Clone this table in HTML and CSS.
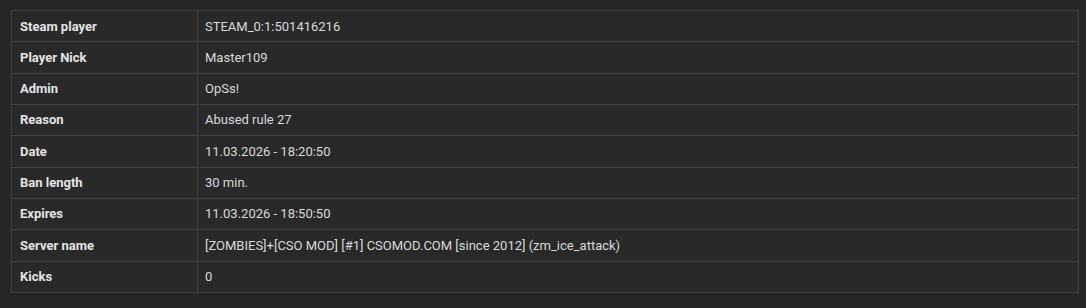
FILE: index.html
```html
<!DOCTYPE html>
<html>
<head>
<meta charset="utf-8">
<link rel="stylesheet" href="styles.css">
</head>
<body>
<table class="info">
  <tbody>
    <tr><th>Steam player</th><td>STEAM_0:1:501416216</td></tr>
    <tr><th>Player Nick</th><td>Master109</td></tr>
    <tr><th>Admin</th><td>OpSs!</td></tr>
    <tr><th>Reason</th><td>Abused rule 27</td></tr>
    <tr><th>Date</th><td>11.03.2026 - 18:20:50</td></tr>
    <tr><th>Ban length</th><td>30 min.</td></tr>
    <tr><th>Expires</th><td>11.03.2026 - 18:50:50</td></tr>
    <tr><th>Server name</th><td>[ZOMBIES]+[CSO MOD] [#1] CSOMOD.COM [since 2012] (zm_ice_attack)</td></tr>
    <tr><th>Kicks</th><td>0</td></tr>
  </tbody>
</table>
</body>
</html>
```
FILE: styles.css
```css
html, body {
  background: #262626;
}
body {
  margin: 10px 7px 0 11px;
  font-family: Roboto, "Liberation Sans", sans-serif;
  font-size: 13px;
  color: #dedede;
}
.info {
  width: 1068px;
  border-collapse: collapse;
  background: #292929;
  border: 1px solid #424242;
}
.info th, .info td {
  border: 1px solid #424242;
  padding: 7.5px 8px 7.5px 8px;
  line-height: 15.33px;
  text-align: left;
  vertical-align: middle;
}
.info th {
  width: 169px;
  font-weight: bold;
  color: #e4e4e4;
}
.info td {
  padding-left: 7px;
  font-weight: normal;
  color: #dadada;
}
```
